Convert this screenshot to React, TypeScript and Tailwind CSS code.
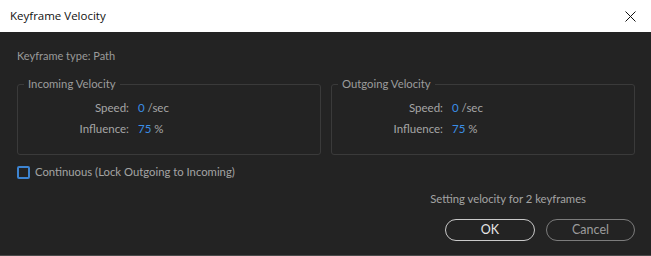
import React from 'react';

const font = { fontFamily: 'Lato, "Open Sans", sans-serif' };

const VelocityBox: React.FC<{ title: string }> = ({ title }) => (
  <fieldset className="w-[304px] border border-[#3a3a3a] rounded-[3px] pb-[18px] px-0">
    <legend className="ml-[6px] px-[4px] text-[11.3px] leading-[14px] text-[#9c9c9c]">{title}</legend>
    <div className="grid grid-cols-[111px_auto] gap-y-[7px] mt-[10px] text-[11.5px] leading-[14px]">
      <span className="text-right text-[#a6a6a6]">Speed:</span>
      <span className="pl-[9px] text-[#a6a6a6]">
        <span className="text-[#3a8ee6]">0</span> /sec
      </span>
      <span className="text-right text-[#a6a6a6]">Influence:</span>
      <span className="pl-[9px] text-[#a6a6a6]">
        <span className="text-[#3a8ee6]">75</span> %
      </span>
    </div>
  </fieldset>
);

export default function App() {
  return (
    <div className="w-[651px] h-[256px] flex flex-col bg-[#232323] overflow-hidden" style={font}>
      <div className="h-[32px] shrink-0 bg-white flex items-center justify-between pl-[10px] pr-[15px]">
        <span className="text-[11.5px] text-[#111]" style={{ fontFamily: '"Open Sans", Lato, sans-serif' }}>
          Keyframe Velocity
        </span>
        <svg width="11" height="11" viewBox="0 0 11 11">
          <path d="M0.5 0.5 L10.5 10.5 M10.5 0.5 L0.5 10.5" stroke="#111" strokeWidth="1" />
        </svg>
      </div>
      <div className="flex-1 flex flex-col pl-[17px] pr-[16px] pt-[17px] border-b border-[#4a4a4a]">
        <div className="text-[11px] leading-[14px] text-[#9a9a9a]">Keyframe type: Path</div>
        <div className="flex gap-[10px] mt-[14px]">
          <VelocityBox title="Incoming Velocity" />
          <VelocityBox title="Outgoing Velocity" />
        </div>
        <label className="flex items-center gap-[5px] mt-[10px] text-[11.3px] leading-[14px] text-[#a3a3a3]">
          <span className="w-[13px] h-[13px] rounded-[2px] border-2 border-[#3d84d1]" />
          Continuous (Lock Outgoing to Incoming)
        </label>
        <div className="flex justify-end mt-[13px] pr-[49px] text-[11.3px] leading-[14px] text-[#a3a3a3]">
          Setting velocity for 2 keyframes
        </div>
        <div className="flex justify-end gap-[11px] mt-[13px]">
          <button className="w-[90px] h-[22px] rounded-full border-[1.5px] border-[#c9c9c9] text-[12.5px] text-[#e6e6e6]">
            OK
          </button>
          <button className="w-[89px] h-[22px] rounded-full border-[1.5px] border-[#7c7c7c] text-[12.5px] text-[#9c9c9c]">
            Cancel
          </button>
        </div>
      </div>
    </div>
  );
}
